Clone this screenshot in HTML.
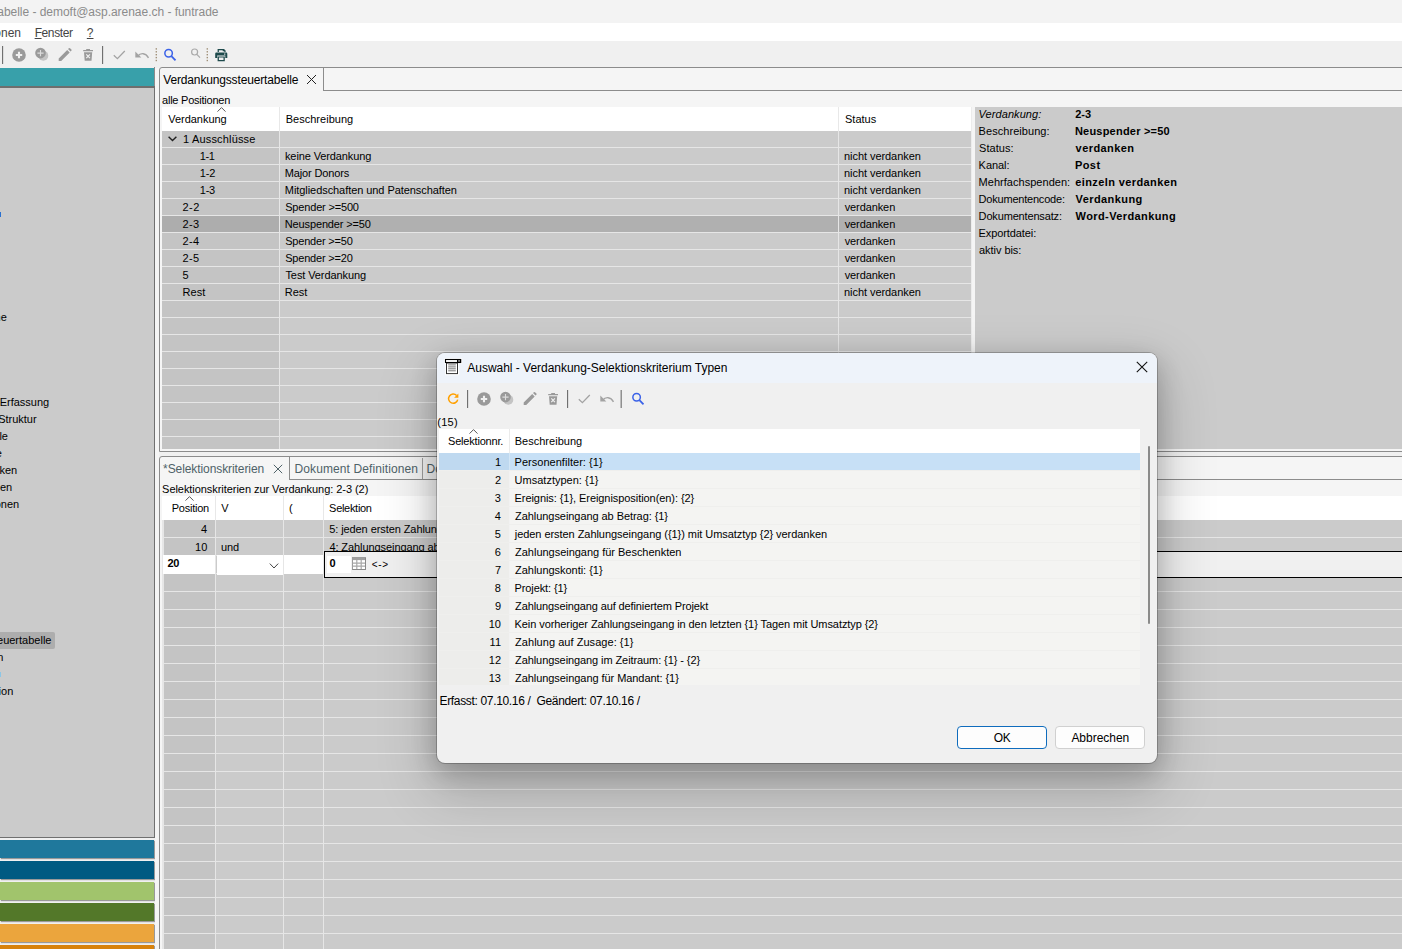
<!DOCTYPE html><html lang="de"><head><meta charset="utf-8"><title>Verdankungssteuertabelle</title><style>
*{box-sizing:border-box;margin:0;padding:0}
html,body{width:1402px;height:949px;overflow:hidden;background:#f0f0f0}
body{position:relative;font-family:"Liberation Sans",sans-serif;font-size:11px;color:#000}
.a{position:absolute}
.t{position:absolute;white-space:pre;line-height:16px;height:16px}
.ui{font-size:12px}
.b{font-weight:bold}
.i{font-style:italic}
.r{text-align:right}
.hl{position:absolute;height:1px;background:#e6e6e6}
</style></head><body>
<div class="a" style="left:0px;top:0px;width:1402px;height:23px;background:#f3f3f3;"></div>
<div class="t ui" style="left:-109.02px;top:4px;color:#8b8b8b;letter-spacing:-0.027px;">Verdankungssteuertabelle - demoft@asp.arenae.ch - funtrade</div>
<div class="a" style="left:0px;top:23px;width:1402px;height:18px;background:#ffffff;"></div>
<div class="t ui" style="left:-25.66px;top:25px;color:#444;">Aktionen</div>
<div class="t ui" style="left:34.64px;top:25px;color:#444;letter-spacing:-0.390px;"><u>F</u>enster</div>
<div class="t ui" style="left:86.82px;top:25px;color:#444;"><u>?</u></div>
<div class="a" style="left:0px;top:41px;width:1402px;height:26px;background:#f0f0f0;"></div>
<svg class="a" style="left:0px;top:42px" width="152" height="26" viewBox="0 42 152 26"><rect x="2" y="46" width="1.15" height="18" fill="#707070"/><circle cx="19" cy="55" r="6.8" fill="#9a9a9a"/><path d="M19 51.8v6.4M15.8 55h6.4" stroke="#f0f0f0" stroke-width="2.1"/><circle cx="43.3" cy="55.8" r="5" fill="#c4c4c4"/><circle cx="40.5" cy="53.1" r="5.3" fill="#9a9a9a"/><path d="M40.5 50v6.2M37.4 53.1h6.2" stroke="#dcdcdc" stroke-width="1.1"/><path d="M58.7 60.9v-2.5l8.5-8.5 2.5 2.5-8.5 8.5zM68 49.1l0.9-0.9a0.8 0.8 0 0 1 1.1 0l1.4 1.4a0.8 0.8 0 0 1 0 1.1l-0.9 0.9z" fill="#9a9a9a"/><path d="M83.2 50h9.8v1.3h-9.8zM86.2 49h3.8v1h-3.8zM84 52.2h8.2l-0.7 8.6h-6.8z" fill="#9a9a9a"/><path d="M86.3 54.3l3.6 3.9M89.9 54.3l-3.6 3.9" stroke="#f0f0f0" stroke-width="1.2"/><rect x="102" y="46" width="1.15" height="18" fill="#707070"/><path d="M113.8 55.2l3.6 3.4 7.4-7.6" fill="none" stroke="#a3a3a3" stroke-width="1.3"/><path d="M135.3 51.5v6h6z" fill="#a3a3a3"/><path d="M137.5 56.2c3.2-3.6 8.2-3.6 11 1.6" fill="none" stroke="#a3a3a3" stroke-width="1.4"/></svg>
<svg class="a" style="left:152px;top:42px" width="88" height="26" viewBox="152 42 88 26"><rect x="155.6" y="48.2" width="1.4" height="1.4" fill="#a09078"/><rect x="155.6" y="51.1" width="1.4" height="1.4" fill="#a09078"/><rect x="155.6" y="54.0" width="1.4" height="1.4" fill="#a09078"/><rect x="155.6" y="56.9" width="1.4" height="1.4" fill="#a09078"/><rect x="155.6" y="59.8" width="1.4" height="1.4" fill="#a09078"/><rect x="206.6" y="48.2" width="1.4" height="1.4" fill="#a09078"/><rect x="206.6" y="51.1" width="1.4" height="1.4" fill="#a09078"/><rect x="206.6" y="54.0" width="1.4" height="1.4" fill="#a09078"/><rect x="206.6" y="56.9" width="1.4" height="1.4" fill="#a09078"/><rect x="206.6" y="59.8" width="1.4" height="1.4" fill="#a09078"/><circle cx="168.6" cy="53.3" r="3.75" fill="none" stroke="#3b62e8" stroke-width="1.5"/><path d="M171.4 56.2l4.1 4.2" stroke="#3b62e8" stroke-width="1.8"/><circle cx="194.6" cy="52" r="3" fill="none" stroke="#aaa" stroke-width="1.2"/><path d="M196.8 54.4l3.2 3.2" stroke="#aaa" stroke-width="1.3"/><path d="M217.6 49h6.4l1.6 1.6v2.4h-1.3v-1.7h-1.6v-1h-3.8v2.7h-1.3zM216.3 52.6h9.9a1.1 1.1 0 0 1 1.1 1.1v4.2h-2v-2.4h-8.1v2.4h-2v-4.2a1.1 1.1 0 0 1 1.1-1.1zM217.6 56.4h7.2v4.8h-7.2zM218.9 57.6v2.4h4.6v-2.4z" fill="#1e4a4c" fill-rule="evenodd"/><rect x="224" y="53.6" width="1.4" height="1" fill="#f0f0f0"/></svg>
<div class="a" style="left:0px;top:68px;width:154px;height:18px;background:#38a0aa;"></div>
<div class="a" style="left:0px;top:86px;width:155px;height:752px;background:#cbcbcb;border-top:2px solid #6e6e6e;border-right:1px solid #707070;border-bottom:1px solid #707070;"></div>
<div class="a" style="left:154px;top:67px;width:1px;height:19px;background:#8c8c8c;"></div>
<div class="a" style="left:0px;top:840px;width:154px;height:18px;background:#1f789c;box-shadow:1px 1px 1px #999;"></div>
<div class="a" style="left:0px;top:861px;width:154px;height:18px;background:#005a82;box-shadow:1px 1px 1px #999;"></div>
<div class="a" style="left:0px;top:882px;width:154px;height:18px;background:#a1c46c;box-shadow:1px 1px 1px #999;"></div>
<div class="a" style="left:0px;top:903px;width:154px;height:18px;background:#537829;box-shadow:1px 1px 1px #999;"></div>
<div class="a" style="left:0px;top:924px;width:154px;height:18px;background:#eba53d;box-shadow:1px 1px 1px #999;"></div>
<div class="a" style="left:0px;top:945px;width:154px;height:18px;background:#d8820c;box-shadow:1px 1px 1px #999;"></div>
<div class="t " style="left:-46.45px;top:309px;">Kampagne</div>
<div class="t " style="left:-0.34px;top:394px;">Erfassung</div>
<div class="t " style="left:-1.89px;top:411px;">Struktur</div>
<div class="t " style="left:-26.93px;top:428px;">Tabelle</div>
<div class="t " style="left:-24.35px;top:445px;">Code</div>
<div class="t " style="left:-35.42px;top:462px;">Verdanken</div>
<div class="t " style="left:-30.63px;top:479px;">Aktionen</div>
<div class="t " style="left:-38.31px;top:496px;">Selektionen</div>
<div class="a" style="left:0px;top:632px;width:55px;height:17px;background:#adadad;border-radius:0 2px 2px 0;"></div>
<div class="t " style="left:-75.78px;top:632px;">Verdankungssteuertabelle</div>
<div class="t " style="left:-58.91px;top:649px;">Dokumenten</div>
<div class="t " style="left:-32.00px;top:683px;">Selektion</div>
<div class="a" style="left:0px;top:672px;width:1px;height:5px;background:#8cc6e6;"></div>
<div class="a" style="left:0px;top:212px;width:1px;height:5px;background:#2a70d0;"></div>
<div class="a" style="left:155px;top:68px;width:4px;height:881px;background:#f5f5f5;"></div>
<div class="a" style="left:159px;top:67px;width:1250px;height:385px;background:#f5f5f5;border:1px solid #8c8c8c;border-radius:3px 0 0 0;"></div>
<div class="a" style="left:323px;top:68px;width:1px;height:22px;background:#8c8c8c;"></div>
<div class="a" style="left:323px;top:90px;width:1100px;height:1px;background:#8c8c8c;"></div>
<div class="t ui" style="left:163.30px;top:72px;letter-spacing:-0.157px;">Verdankungssteuertabelle</div>
<svg class="a" style="left:306px;top:74px" width="11" height="11" viewBox="0 0 11 11"><path d="M1 1l9 9M10 1l-9 9" stroke="#222" stroke-width="1"/></svg>
<div class="t " style="left:162.06px;top:92px;letter-spacing:-0.233px;">alle Positionen</div>
<div class="a" style="left:162px;top:107px;width:809px;height:24px;background:#ffffff;"></div>
<div class="a" style="left:279px;top:107px;width:1px;height:24px;background:#e8e8e8;"></div>
<div class="a" style="left:838px;top:107px;width:1px;height:24px;background:#e8e8e8;"></div>
<div class="t " style="left:168.30px;top:111px;letter-spacing:-0.036px;">Verdankung</div>
<div class="t " style="left:285.72px;top:111px;letter-spacing:0.016px;">Beschreibung</div>
<div class="t " style="left:845.00px;top:111px;">Status</div>
<svg class="a" style="left:217px;top:107px" width="9" height="5" viewBox="0 0 9 5"><path d="M0.5 4.6l4-4 4 4" fill="none" stroke="#444" stroke-width="0.9"/></svg>
<div class="a" style="left:162px;top:131px;width:117px;height:318px;background:#c4c4c4;"></div>
<div class="a" style="left:280px;top:131px;width:558px;height:318px;background:#cbcbcb;"></div>
<div class="a" style="left:839px;top:131px;width:132px;height:318px;background:#cbcbcb;"></div>
<div class="a" style="left:279px;top:131px;width:1px;height:318px;background:#e6e6e6;"></div>
<div class="a" style="left:838px;top:131px;width:1px;height:318px;background:#e6e6e6;"></div>
<div class="a" style="left:162px;top:216px;width:117px;height:16px;background:#adadad;"></div>
<div class="a" style="left:280px;top:216px;width:558px;height:16px;background:#b0b0b0;"></div>
<div class="a" style="left:839px;top:216px;width:132px;height:16px;background:#b0b0b0;"></div>
<div class="hl" style="left:162px;top:147px;width:809px"></div>
<div class="hl" style="left:162px;top:164px;width:809px"></div>
<div class="hl" style="left:162px;top:181px;width:809px"></div>
<div class="hl" style="left:162px;top:198px;width:809px"></div>
<div class="hl" style="left:162px;top:215px;width:809px"></div>
<div class="hl" style="left:162px;top:232px;width:809px"></div>
<div class="hl" style="left:162px;top:249px;width:809px"></div>
<div class="hl" style="left:162px;top:266px;width:809px"></div>
<div class="hl" style="left:162px;top:283px;width:809px"></div>
<div class="hl" style="left:162px;top:300px;width:809px"></div>
<div class="hl" style="left:162px;top:317px;width:809px"></div>
<div class="hl" style="left:162px;top:334px;width:809px"></div>
<div class="hl" style="left:162px;top:351px;width:809px"></div>
<div class="hl" style="left:162px;top:368px;width:809px"></div>
<div class="hl" style="left:162px;top:385px;width:809px"></div>
<div class="hl" style="left:162px;top:402px;width:809px"></div>
<div class="hl" style="left:162px;top:419px;width:809px"></div>
<div class="hl" style="left:162px;top:436px;width:809px"></div>
<div class="a" style="left:971px;top:107px;width:1px;height:342px;background:#ececec;"></div>
<div class="t " style="left:183.08px;top:131px;letter-spacing:0.165px;">1 Ausschlüsse</div>
<div class="t " style="left:199.78px;top:148px;letter-spacing:-0.400px;">1-1</div>
<div class="t " style="left:284.99px;top:148px;letter-spacing:-0.112px;">keine Verdankung</div>
<div class="t " style="left:843.99px;top:148px;letter-spacing:-0.056px;">nicht verdanken</div>
<div class="t " style="left:199.78px;top:165px;letter-spacing:-0.187px;">1-2</div>
<div class="t " style="left:284.82px;top:165px;letter-spacing:-0.149px;">Major Donors</div>
<div class="t " style="left:843.99px;top:165px;letter-spacing:-0.056px;">nicht verdanken</div>
<div class="t " style="left:199.78px;top:182px;letter-spacing:-0.215px;">1-3</div>
<div class="t " style="left:284.82px;top:182px;letter-spacing:-0.065px;">Mitgliedschaften und Patenschaften</div>
<div class="t " style="left:843.99px;top:182px;letter-spacing:-0.056px;">nicht verdanken</div>
<div class="t " style="left:182.45px;top:199px;letter-spacing:0.475px;">2-2</div>
<div class="t " style="left:285.20px;top:199px;letter-spacing:-0.172px;">Spender &gt;=500</div>
<div class="t " style="left:844.70px;top:199px;letter-spacing:-0.101px;">verdanken</div>
<div class="t " style="left:182.45px;top:216px;letter-spacing:0.448px;">2-3</div>
<div class="t " style="left:284.82px;top:216px;letter-spacing:-0.142px;">Neuspender &gt;=50</div>
<div class="t " style="left:844.70px;top:216px;letter-spacing:-0.101px;">verdanken</div>
<div class="t " style="left:182.45px;top:233px;letter-spacing:0.365px;">2-4</div>
<div class="t " style="left:285.20px;top:233px;letter-spacing:-0.196px;">Spender &gt;=50</div>
<div class="t " style="left:844.70px;top:233px;letter-spacing:-0.101px;">verdanken</div>
<div class="t " style="left:182.45px;top:250px;letter-spacing:0.448px;">2-5</div>
<div class="t " style="left:285.20px;top:250px;letter-spacing:-0.196px;">Spender &gt;=20</div>
<div class="t " style="left:844.70px;top:250px;letter-spacing:-0.101px;">verdanken</div>
<div class="t " style="left:182.56px;top:267px;">5</div>
<div class="t " style="left:285.48px;top:267px;letter-spacing:-0.098px;">Test Verdankung</div>
<div class="t " style="left:844.70px;top:267px;letter-spacing:-0.101px;">verdanken</div>
<div class="t " style="left:182.62px;top:284px;letter-spacing:-0.008px;">Rest</div>
<div class="t " style="left:284.82px;top:284px;letter-spacing:-0.075px;">Rest</div>
<div class="t " style="left:843.99px;top:284px;letter-spacing:-0.056px;">nicht verdanken</div>
<svg class="a" style="left:168px;top:136px" width="9" height="6" viewBox="0 0 9 6"><path d="M0.6 0.7l3.9 3.9 3.9-3.9" fill="none" stroke="#222" stroke-width="1.4"/></svg>
<div class="a" style="left:975px;top:107px;width:430px;height:342px;background:#cbcbcb;"></div>
<div class="t i" style="left:978.57px;top:106px;letter-spacing:0.079px;">Verdankung:</div>
<div class="t b" style="left:1075.27px;top:106px;letter-spacing:-0.040px;">2-3</div>
<div class="t " style="left:978.62px;top:123px;letter-spacing:0.052px;">Beschreibung:</div>
<div class="t b" style="left:1074.88px;top:123px;letter-spacing:0.223px;">Neuspender &gt;=50</div>
<div class="t " style="left:979.00px;top:140px;letter-spacing:0.070px;">Status:</div>
<div class="t b" style="left:1075.60px;top:140px;letter-spacing:0.433px;">verdanken</div>
<div class="t " style="left:978.62px;top:157px;letter-spacing:-0.054px;">Kanal:</div>
<div class="t b" style="left:1074.88px;top:157px;letter-spacing:0.452px;">Post</div>
<div class="t " style="left:978.62px;top:174px;letter-spacing:0.029px;">Mehrfachspenden:</div>
<div class="t b" style="left:1075.21px;top:174px;letter-spacing:0.398px;">einzeln verdanken</div>
<div class="t " style="left:978.62px;top:191px;letter-spacing:-0.211px;">Dokumentencode:</div>
<div class="t b" style="left:1075.54px;top:191px;letter-spacing:0.422px;">Verdankung</div>
<div class="t " style="left:978.62px;top:208px;letter-spacing:-0.162px;">Dokumentensatz:</div>
<div class="t b" style="left:1075.60px;top:208px;letter-spacing:0.398px;">Word-Verdankung</div>
<div class="t " style="left:978.62px;top:225px;letter-spacing:-0.097px;">Exportdatei:</div>
<div class="t " style="left:979.06px;top:242px;letter-spacing:-0.051px;">aktiv bis:</div>
<div class="a" style="left:159px;top:456px;width:1250px;height:500px;background:#f5f5f5;border:1px solid #8c8c8c;border-radius:3px 0 0 0;"></div>
<div class="a" style="left:289px;top:457px;width:1px;height:23px;background:#8c8c8c;"></div>
<div class="a" style="left:289px;top:479px;width:1120px;height:1px;background:#8c8c8c;"></div>
<div class="a" style="left:422px;top:458px;width:1px;height:21px;background:#a0a0a0;"></div>
<div class="t ui" style="left:163.12px;top:461px;color:#4e6268;letter-spacing:-0.085px;">*Selektionskriterien</div>
<svg class="a" style="left:273px;top:464px" width="10" height="10" viewBox="0 0 10 10"><path d="M0.8 0.8l8.4 8.4M9.2 0.8l-8.4 8.4" stroke="#4e6268" stroke-width="1"/></svg>
<div class="t ui" style="left:294.54px;top:461px;color:#4e6268;letter-spacing:0.105px;">Dokument Definitionen</div>
<div class="t ui" style="left:426.54px;top:461px;color:#4e6268;">Dokument</div>
<div class="t " style="left:162.10px;top:481px;letter-spacing:-0.054px;">Selektionskriterien zur Verdankung: 2-3 (2)</div>
<div class="a" style="left:162px;top:496px;width:1245px;height:24px;background:#ffffff;"></div>
<div class="a" style="left:215px;top:496px;width:1px;height:24px;background:#e8e8e8;"></div>
<div class="a" style="left:283px;top:496px;width:1px;height:24px;background:#e8e8e8;"></div>
<div class="a" style="left:323px;top:496px;width:1px;height:24px;background:#e8e8e8;"></div>
<div class="t " style="left:171.72px;top:500px;letter-spacing:-0.238px;">Position</div>
<div class="t " style="left:221.30px;top:500px;">V</div>
<div class="t " style="left:288.94px;top:500px;">(</div>
<div class="t " style="left:329.11px;top:500px;letter-spacing:-0.301px;">Selektion</div>
<svg class="a" style="left:185px;top:496px" width="9" height="5" viewBox="0 0 9 5"><path d="M0.5 4.6l4-4 4 4" fill="none" stroke="#444" stroke-width="0.9"/></svg>
<div class="a" style="left:162px;top:520px;width:1245px;height:440px;background:#e6e6e6;"></div>
<div class="a" style="left:164px;top:520px;width:51px;height:440px;background:#c4c4c4;"></div>
<div class="a" style="left:216px;top:520px;width:67px;height:440px;background:#cbcbcb;"></div>
<div class="a" style="left:284px;top:520px;width:39px;height:440px;background:#cbcbcb;"></div>
<div class="a" style="left:324px;top:520px;width:1085px;height:440px;background:#cbcbcb;"></div>
<div class="hl" style="left:162px;top:537px;width:1245px"></div>
<div class="hl" style="left:162px;top:555px;width:1245px"></div>
<div class="hl" style="left:162px;top:573px;width:1245px"></div>
<div class="hl" style="left:162px;top:591px;width:1245px"></div>
<div class="hl" style="left:162px;top:609px;width:1245px"></div>
<div class="hl" style="left:162px;top:627px;width:1245px"></div>
<div class="hl" style="left:162px;top:645px;width:1245px"></div>
<div class="hl" style="left:162px;top:663px;width:1245px"></div>
<div class="hl" style="left:162px;top:681px;width:1245px"></div>
<div class="hl" style="left:162px;top:699px;width:1245px"></div>
<div class="hl" style="left:162px;top:717px;width:1245px"></div>
<div class="hl" style="left:162px;top:735px;width:1245px"></div>
<div class="hl" style="left:162px;top:753px;width:1245px"></div>
<div class="hl" style="left:162px;top:771px;width:1245px"></div>
<div class="hl" style="left:162px;top:789px;width:1245px"></div>
<div class="hl" style="left:162px;top:807px;width:1245px"></div>
<div class="hl" style="left:162px;top:825px;width:1245px"></div>
<div class="hl" style="left:162px;top:843px;width:1245px"></div>
<div class="hl" style="left:162px;top:861px;width:1245px"></div>
<div class="hl" style="left:162px;top:879px;width:1245px"></div>
<div class="hl" style="left:162px;top:897px;width:1245px"></div>
<div class="hl" style="left:162px;top:915px;width:1245px"></div>
<div class="hl" style="left:162px;top:933px;width:1245px"></div>
<div class="t " style="left:201.07px;top:521px;">4</div>
<div class="t " style="left:195.08px;top:539px;">10</div>
<div class="t " style="left:220.94px;top:539px;letter-spacing:-0.147px;">und</div>
<div class="t " style="left:329.16px;top:521px;letter-spacing:-0.08px;">5: jeden ersten Zahlungseingang ({1}) mit Umsatztyp {2} verdanken</div>
<div class="t " style="left:329.38px;top:539px;letter-spacing:-0.08px;">4: Zahlungseingang ab Betrag: {1}</div>
<div class="a" style="left:163px;top:555px;width:52px;height:19px;background:#ffffff;"></div>
<div class="t b" style="left:167.47px;top:555px;letter-spacing:-0.295px;">20</div>
<div class="a" style="left:217px;top:555px;width:66px;height:20px;background:#ffffff;"></div>
<svg class="a" style="left:269px;top:563px" width="10" height="6" viewBox="0 0 10 6"><path d="M0.8 0.6l4.2 4.4 4.2-4.4" fill="none" stroke="#444" stroke-width="1"/></svg>
<div class="a" style="left:284px;top:555px;width:39px;height:19px;background:#ffffff;"></div>
<div class="a" style="left:324px;top:551px;width:1090px;height:27px;background:#f0f0f0;border:1px solid #000;"></div>
<div class="a" style="left:327px;top:556px;width:24px;height:17px;background:#ffffff;"></div>
<div class="t b" style="left:329.62px;top:555px;">0</div>
<svg class="a" style="left:352px;top:557px" width="14" height="13" viewBox="0 0 14 13"><rect x="0.5" y="0.5" width="13" height="12" fill="#fff" stroke="#9a9a9a"/><rect x="0.5" y="0.5" width="13" height="2.6" fill="#a0a0a0"/><path d="M0.5 6.1h13M0.5 9.2h13M4.8 3v9.5M9.2 3v9.5" stroke="#a8a8a8" stroke-width="1.2"/><path d="M13.5 1v11.5h-13" fill="none" stroke="#888" stroke-width="1"/></svg>
<div class="t " style="left:371.85px;top:557px;letter-spacing:0.650px;font-size:10px;">&lt;-&gt;</div>
<div class="a" style="left:437px;top:353px;width:720px;height:410px;background:#f0f0f0;border-radius:8px;box-shadow:0 0 0 1px rgba(0,0,0,0.22),0 8px 24px 2px rgba(0,0,0,0.19),0 22px 56px 6px rgba(0,0,0,0.19);overflow:hidden">
<div class="a" style="left:0px;top:0px;width:720px;height:30px;background:#eef3fa;"></div>
<svg class="a" style="left:6px;top:4px" width="21" height="20" viewBox="443 357 21 20"><path d="M444.3 358.3h17.9v5.4h-3v11.5h-13.9v-11.5h-1z" fill="#fff"/><rect x="446.5" y="363" width="11" height="10.6" fill="#fff" stroke="#333" stroke-width="1"/><path d="M448.2 364.9h7.6M448.2 366.9h7.6M448.2 368.8h7.6M448.2 370.8h7.6" stroke="#777" stroke-width="1"/><rect x="445.5" y="359.5" width="15.2" height="3" fill="#fff" stroke="#000" stroke-width="1.1"/><rect x="457" y="359.2" width="4" height="3.6" fill="#000"/><rect x="458.1" y="360.1" width="1.9" height="1.6" fill="#999"/></svg>
<div class="t ui" style="left:30.30px;top:7px;letter-spacing:-0.025px;">Auswahl - Verdankung-Selektionskriterium Typen</div>
<svg class="a" style="left:699px;top:8px" width="12" height="12" viewBox="0 0 12 12"><path d="M0.8 0.8l10.4 10.4M11.2 0.8l-10.4 10.4" stroke="#111" stroke-width="1.1"/></svg>
<svg class="a" style="left:8px;top:37px" width="18" height="18" viewBox="445 390 18 18"><path d="M456.6 395.6A4.6 4.6 0 1 0 457.7 399.6" fill="none" stroke="#ffa000" stroke-width="1.5"/><path d="M458.4 393.4v4.3h-4.3z" fill="#ffa000"/></svg>
<svg class="a" style="left:28px;top:33px" width="152" height="26" viewBox="0 42 152 26"><rect x="2" y="46" width="1.15" height="18" fill="#707070"/><circle cx="19" cy="55" r="6.8" fill="#9a9a9a"/><path d="M19 51.8v6.4M15.8 55h6.4" stroke="#f0f0f0" stroke-width="2.1"/><circle cx="43.3" cy="55.8" r="5" fill="#c4c4c4"/><circle cx="40.5" cy="53.1" r="5.3" fill="#9a9a9a"/><path d="M40.5 50v6.2M37.4 53.1h6.2" stroke="#dcdcdc" stroke-width="1.1"/><path d="M58.7 60.9v-2.5l8.5-8.5 2.5 2.5-8.5 8.5zM68 49.1l0.9-0.9a0.8 0.8 0 0 1 1.1 0l1.4 1.4a0.8 0.8 0 0 1 0 1.1l-0.9 0.9z" fill="#9a9a9a"/><path d="M83.2 50h9.8v1.3h-9.8zM86.2 49h3.8v1h-3.8zM84 52.2h8.2l-0.7 8.6h-6.8z" fill="#9a9a9a"/><path d="M86.3 54.3l3.6 3.9M89.9 54.3l-3.6 3.9" stroke="#f0f0f0" stroke-width="1.2"/><rect x="102" y="46" width="1.15" height="18" fill="#707070"/><path d="M113.8 55.2l3.6 3.4 7.4-7.6" fill="none" stroke="#a3a3a3" stroke-width="1.3"/><path d="M135.3 51.5v6h6z" fill="#a3a3a3"/><path d="M137.5 56.2c3.2-3.6 8.2-3.6 11 1.6" fill="none" stroke="#a3a3a3" stroke-width="1.4"/></svg>
<svg class="a" style="left:180px;top:33px" width="40" height="26" viewBox="152 42 40 26"><rect x="155.6" y="46" width="1.15" height="18" fill="#707070"/><circle cx="171.6" cy="53.3" r="3.75" fill="none" stroke="#3b62e8" stroke-width="1.5"/><path d="M174.4 56.2l4.1 4.2" stroke="#3b62e8" stroke-width="1.8"/></svg>
<div class="t " style="left:0.34px;top:61px;letter-spacing:0.247px;">(15)</div>
<div class="a" style="left:2px;top:76px;width:701px;height:24px;background:#ffffff;"></div>
<div class="a" style="left:72px;top:76px;width:1px;height:24px;background:#ebebeb;"></div>
<div class="t " style="left:11.00px;top:80px;letter-spacing:-0.195px;">Selektionnr.</div>
<div class="t " style="left:77.72px;top:80px;letter-spacing:0.016px;">Beschreibung</div>
<svg class="a" style="left:32px;top:76px" width="9" height="5" viewBox="0 0 9 5"><path d="M0.5 4.6l4-4 4 4" fill="none" stroke="#444" stroke-width="0.9"/></svg>
<div class="a" style="left:2px;top:100px;width:70px;height:232px;background:#ededeb;"></div>
<div class="a" style="left:73px;top:100px;width:630px;height:232px;background:#f4f4f2;"></div>
<div class="a" style="left:72px;top:100px;width:1px;height:232px;background:#f2f2f2;"></div>
<div class="a" style="left:2px;top:100px;width:70px;height:17px;background:#bfd9f0;"></div>
<div class="a" style="left:73px;top:100px;width:630px;height:17px;background:#c7e0f6;"></div>
<div class="a" style="left:72px;top:100px;width:1px;height:17px;background:#d3e6f6;"></div>
<div class="a" style="left:2px;top:100px;width:701px;height:232px;overflow:hidden">
<div class="hl" style="left:0;top:17px;width:701px;background:#efefed"></div>
<div class="t " style="left:55.89px;top:1px;">1</div>
<div class="t " style="left:75.52px;top:1px;letter-spacing:0.033px;">Personenfilter: {1}</div>
<div class="hl" style="left:0;top:35px;width:701px;background:#efefed"></div>
<div class="t " style="left:55.89px;top:19px;">2</div>
<div class="t " style="left:75.57px;top:19px;letter-spacing:0.008px;">Umsatztypen: {1}</div>
<div class="hl" style="left:0;top:53px;width:701px;background:#efefed"></div>
<div class="t " style="left:55.83px;top:37px;">3</div>
<div class="t " style="left:75.52px;top:37px;letter-spacing:-0.063px;">Ereignis: {1}, Ereignisposition(en): {2}</div>
<div class="hl" style="left:0;top:71px;width:701px;background:#efefed"></div>
<div class="t " style="left:55.67px;top:55px;">4</div>
<div class="t " style="left:76.07px;top:55px;letter-spacing:-0.061px;">Zahlungseingang ab Betrag: {1}</div>
<div class="hl" style="left:0;top:89px;width:701px;background:#efefed"></div>
<div class="t " style="left:55.83px;top:73px;">5</div>
<div class="t " style="left:75.77px;top:73px;letter-spacing:-0.053px;">jeden ersten Zahlungseingang ({1}) mit Umsatztyp {2} verdanken</div>
<div class="hl" style="left:0;top:107px;width:701px;background:#efefed"></div>
<div class="t " style="left:55.83px;top:91px;">6</div>
<div class="t " style="left:76.07px;top:91px;letter-spacing:-0.021px;">Zahlungseingang für Beschenkten</div>
<div class="hl" style="left:0;top:125px;width:701px;background:#efefed"></div>
<div class="t " style="left:55.89px;top:109px;">7</div>
<div class="t " style="left:76.07px;top:109px;letter-spacing:-0.033px;">Zahlungskonti: {1}</div>
<div class="hl" style="left:0;top:143px;width:701px;background:#efefed"></div>
<div class="t " style="left:55.83px;top:127px;">8</div>
<div class="t " style="left:75.52px;top:127px;letter-spacing:-0.109px;">Projekt: {1}</div>
<div class="hl" style="left:0;top:161px;width:701px;background:#efefed"></div>
<div class="t " style="left:55.89px;top:145px;">9</div>
<div class="t " style="left:76.07px;top:145px;letter-spacing:-0.115px;">Zahlungseingang auf definiertem Projekt</div>
<div class="hl" style="left:0;top:179px;width:701px;background:#efefed"></div>
<div class="t " style="left:49.68px;top:163px;">10</div>
<div class="t " style="left:75.52px;top:163px;letter-spacing:-0.077px;">Kein vorheriger Zahlungseingang in den letzten {1} Tagen mit Umsatztyp {2}</div>
<div class="hl" style="left:0;top:197px;width:701px;background:#efefed"></div>
<div class="t " style="left:50.61px;top:181px;">11</div>
<div class="t " style="left:76.07px;top:181px;letter-spacing:0.040px;">Zahlung auf Zusage: {1}</div>
<div class="hl" style="left:0;top:215px;width:701px;background:#efefed"></div>
<div class="t " style="left:49.79px;top:199px;">12</div>
<div class="t " style="left:76.07px;top:199px;letter-spacing:-0.089px;">Zahlungseingang im Zeitraum: {1} - {2}</div>
<div class="hl" style="left:0;top:233px;width:701px;background:#efefed"></div>
<div class="t " style="left:49.73px;top:217px;">13</div>
<div class="t " style="left:76.07px;top:217px;letter-spacing:-0.064px;">Zahlungseingang für Mandant: {1}</div>
</div>
<div class="a" style="left:711px;top:93px;width:2px;height:178px;background:#8a8a8a;border-radius:1px;"></div>
<div class="t ui" style="left:2.54px;top:340px;letter-spacing:-0.339px;">Erfasst: 07.10.16 /  Geändert: 07.10.16 /</div>
<div class="a ui" style="left:520px;top:373px;width:90px;height:23px;background:#fdfdfd;border:1.5px solid #0f6cbd;border-radius:4px;"></div>
<div class="a ui" style="left:618px;top:373px;width:90px;height:23px;background:#fdfdfd;border:1px solid #d0d0d0;border-radius:4px;"></div>
<div class="t ui" style="left:556.86px;top:377px;letter-spacing:-0.400px;">OK</div>
<div class="t ui" style="left:634.40px;top:377px;letter-spacing:-0.025px;">Abbrechen</div>
</div>
</body></html>
